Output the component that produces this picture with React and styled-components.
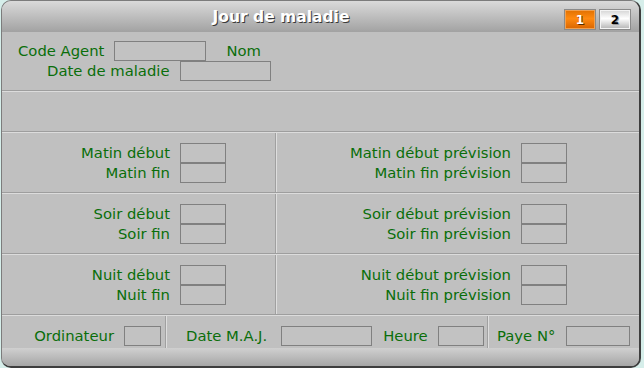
import React from 'react';
import styled, { createGlobalStyle } from 'styled-components';

const GlobalStyle = createGlobalStyle`
    html, body {
        margin: 0;
        padding: 0;
        background: #d6eeea;
    }
    * {
        box-sizing: border-box;
    }
`;

const Window = styled.div`
    margin-left: 1px;
    width: 640px;
    height: 368px;
    display: flex;
    flex-direction: column;
    background: #c0c0c0;
    border-top: 1px solid #7c7c7c;
    border-left: 1px solid #7c7c7c;
    border-right: 2px solid #3e3e3e;
    border-bottom: 2px solid #3e3e3e;
    border-radius: 10px;
    overflow: hidden;
    font-family: "DejaVu Sans", Verdana, sans-serif;
    font-size: 14.8px;
    color: #0a6e0a;
`;

const TitleBar = styled.div`
    height: 31px;
    flex: none;
    display: flex;
    background: linear-gradient(#dadada, #a2a2a2);
`;

const Title = styled.div`
    flex: 1;
    text-align: center;
    line-height: 32px;
    padding-right: 4px;
    font-weight: bold;
    font-size: 15.5px;
    color: #ffffff;
    text-shadow: 1px 1px 0 #3a3a3a;
`;

const Pages = styled.div`
    display: flex;
    gap: 3px;
    padding-top: 8px;
    margin-right: 8px;
`;

const PageButton = styled.div`
    width: 32px;
    height: 21px;
    border: 1px solid #8a8a8a;
    display: flex;
    align-items: center;
    justify-content: center;
    font-size: 12px;
    font-weight: bold;
    color: ${(p) => (p.$active ? '#ffffff' : '#000000')};
    text-shadow: ${(p) => (p.$active ? '1px 1px 0 #5a2a00' : '1px 1px 0 #9a9a9a')};
    background: ${(p) =>
        p.$active
            ? 'linear-gradient(#e07000, #ff8a10 45%, #d86400)'
            : 'linear-gradient(#d4d4d4, #ffffff 45%, #b4b4b4)'};
    box-shadow: inset 0 0 0 1px ${(p) => (p.$active ? '#f0a050' : '#f4f4f4')};
`;

const TopSection = styled.div`
    height: 58px;
    flex: none;
    padding-top: 9px;
`;

const TopRow = styled.div`
    height: 20px;
    display: flex;
    align-items: center;
    padding-left: ${(p) => p.$indent}px;
    gap: 10px;
`;

const Label = styled.span`
    white-space: nowrap;
    line-height: 20px;
    margin-left: ${(p) => p.$before || 0}px;
    margin-right: ${(p) => p.$after || 0}px;
`;

const Input = styled.div`
    width: ${(p) => p.$w}px;
    height: 20px;
    flex: none;
    border: 1px solid #808080;
    background: #c2c2c2;
`;

const HLine = styled.div`
    height: 2px;
    flex: none;
    border-top: 1px solid #9e9e9e;
    border-bottom: 1px solid #dcdcdc;
`;

const EmptySection = styled.div`
    height: 39px;
    flex: none;
`;

const GridRow = styled.div`
    height: 59px;
    flex: none;
    display: flex;
`;

const VLine = styled.div`
    width: 2px;
    flex: none;
    border-left: 1px solid #a0a0a0;
    border-right: 1px solid #dedede;
`;

const Cell = styled.div`
    width: ${(p) => p.$w}px;
    flex: none;
    display: flex;
    justify-content: flex-end;
    align-items: center;
    padding-right: ${(p) => p.$pr}px;
`;

const Pair = styled.div`
    display: grid;
    grid-template-columns: auto 46px;
    grid-auto-rows: 20px;
    column-gap: 10px;
    text-align: right;
`;

const Footer = styled.div`
    height: 32px;
    flex: none;
    display: flex;
`;

const FooterCell = styled.div`
    width: ${(p) => p.$w}px;
    flex: none;
    display: flex;
    align-items: flex-start;
    justify-content: ${(p) => (p.$end ? 'flex-end' : 'flex-start')};
    padding: 10px ${(p) => p.$pr || 0}px 0 ${(p) => p.$pl || 0}px;
    gap: 10px;
`;

const BottomBar = styled.div`
    flex: 1;
    background: linear-gradient(#d0d0d0, #a6a6a6);
`;

const sections = ['Matin', 'Soir', 'Nuit'];

export default function App() {
    return (
        <>
            <GlobalStyle />
            <Window>
                <TitleBar>
                    <Title>Jour de maladie</Title>
                    <Pages>
                        <PageButton $active>1</PageButton>
                        <PageButton>2</PageButton>
                    </Pages>
                </TitleBar>

                <TopSection>
                    <TopRow $indent={16}>
                        <Label>Code Agent</Label>
                        <Input $w={92} />
                        <Label $before={10}>Nom</Label>
                    </TopRow>
                    <TopRow $indent={45}>
                        <Label>Date de maladie</Label>
                        <Input $w={91} />
                    </TopRow>
                </TopSection>
                <HLine />
                <EmptySection />
                <HLine />

                {sections.map((name) => (
                    <React.Fragment key={name}>
                        <GridRow>
                            <Cell $w={273} $pr={49}>
                                <Pair>
                                    <Label>{name} début</Label>
                                    <Input $w={46} />
                                    <Label>{name} fin</Label>
                                    <Input $w={46} />
                                </Pair>
                            </Cell>
                            <VLine />
                            <Cell $w={363} $pr={73}>
                                <Pair>
                                    <Label>{name} début prévision</Label>
                                    <Input $w={46} />
                                    <Label>{name} fin prévision</Label>
                                    <Input $w={46} />
                                </Pair>
                            </Cell>
                        </GridRow>
                        <HLine />
                    </React.Fragment>
                ))}

                <Footer>
                    <FooterCell $w={163} $end $pr={4}>
                        <Label>Ordinateur</Label>
                        <Input $w={37} />
                    </FooterCell>
                    <VLine />
                    <FooterCell $w={320} $pl={19}>
                        <Label $after={4}>Date M.A.J.</Label>
                        <Input $w={91} />
                        <Label $before={1}>Heure</Label>
                        <Input $w={46} />
                    </FooterCell>
                    <VLine />
                    <FooterCell $w={149} $pl={8}>
                        <Label $after={1}>Paye N°</Label>
                        <Input $w={64} />
                    </FooterCell>
                </Footer>
                <BottomBar />
            </Window>
        </>
    );
}
